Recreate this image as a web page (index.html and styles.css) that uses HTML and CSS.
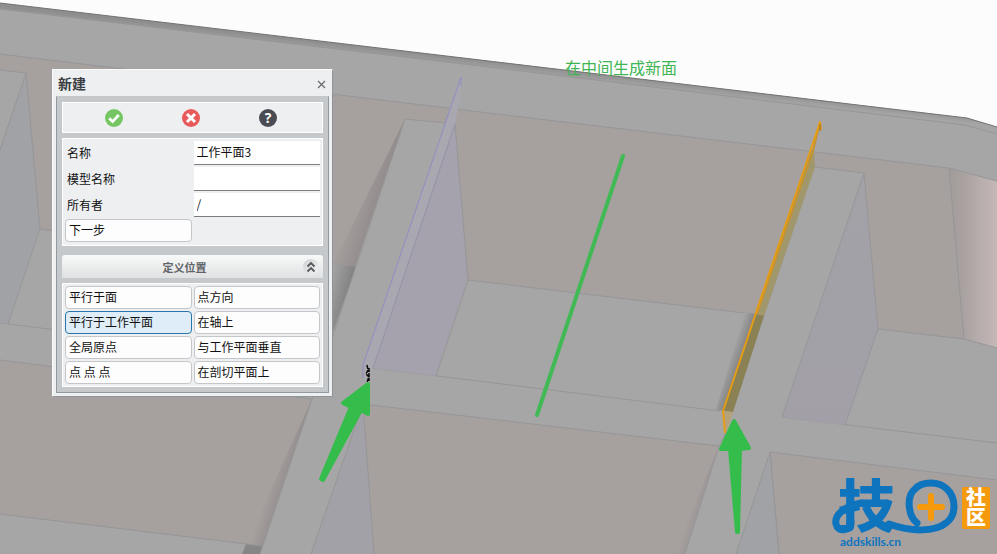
FILE: index.html
```html
<!DOCTYPE html>
<html lang="zh-CN">
<head>
    <meta charset="UTF-8">
    <meta name="viewport" content="width=device-width, initial-scale=1.0">
    <title>新建工作平面</title>
    <link rel="stylesheet" href="styles.css">
</head>
<body>
    <main class="viewport">
        <svg class="scene" viewBox="0 0 997 554" preserveAspectRatio="xMidYMid slice" aria-hidden="true">
            <defs>
                <linearGradient id="rim" x1="500" y1="62" x2="499" y2="71" gradientUnits="userSpaceOnUse">
                    <stop offset="0" stop-color="#8e8e8e"/>
                    <stop offset="1" stop-color="#a5a5a5"/>
                </linearGradient>
                <linearGradient id="corner">
                    <stop offset="0" stop-color="#a19b9a"/>
                    <stop offset="0.3" stop-color="#a9a2a1"/>
                    <stop offset="1" stop-color="#c4b8b7"/>
                </linearGradient>
                <linearGradient id="face" x1="0" y1="0" x2="0" y2="1">
                    <stop offset="0" stop-color="#a3a2a7"/>
                    <stop offset="1" stop-color="#a29fa8"/>
                </linearGradient>
                <linearGradient id="shade-wall" x1="349" y1="207" x2="374" y2="215" gradientUnits="userSpaceOnUse">
                    <stop offset="0" stop-color="#a6a09f"/>
                    <stop offset="1" stop-color="#928c8c"/>
                </linearGradient>
                <linearGradient id="shade-floor" x1="324" y1="298" x2="347" y2="304" gradientUnits="userSpaceOnUse">
                    <stop offset="0" stop-color="#a5a5a5"/>
                    <stop offset="1" stop-color="#808080"/>
                </linearGradient>
                <linearGradient id="shade-left" x1="273" y1="470" x2="289" y2="475" gradientUnits="userSpaceOnUse">
                    <stop offset="0" stop-color="#a6a09f"/>
                    <stop offset="1" stop-color="#948e8e"/>
                </linearGradient>
                <linearGradient id="shade-mid" x1="694" y1="496" x2="704" y2="499" gradientUnits="userSpaceOnUse">
                    <stop offset="0" stop-color="#a6a09f"/>
                    <stop offset="1" stop-color="#9b9595"/>
                </linearGradient>
                <linearGradient id="shade-plane" x1="729" y1="360" x2="741" y2="364" gradientUnits="userSpaceOnUse">
                    <stop offset="0" stop-color="#a5a5a5"/>
                    <stop offset="1" stop-color="#7e7e7e"/>
                </linearGradient>
            </defs>

            <rect width="997" height="554" fill="#a6a6a6"/>
            <polygon points="0,0 997,0 997,127 967,118 497,62 0,3" fill="#fcfcfc"/>
            <polygon points="0,3 497,62 967,118 997,127 997,134 965,125 497,68 0,9" fill="url(#rim)"/>
            <path class="edge edge-dark" d="M0 3 497 62 967 118 997 127"/>
            <path class="edge" d="M0 9 497 68 965 125 997 134"/>

            <!-- back wall -->
            <polygon points="0,54 497,114 949,168 964,339 468,280 40,229 0,224" fill="#a6a09f"/>
            <polygon points="949,168 997,181 997,348 964,339" fill="url(#corner)"/>
            <path class="edge" d="M0 54 497 114 949 168 997 181M949 168 964 339M40 229 468 280 878 329 964 339 997 348"/>

            <!-- shadows beside the first rib -->
            <polygon points="405,119 355,267 333,264" fill="url(#shade-wall)"/>
            <polygon points="333,264 356,267 333,332 310,330" fill="url(#shade-floor)"/>

            <!-- lower pockets -->
            <polygon points="0,360 312,399 263,546 0,514" fill="#a6a09f"/>
            <polygon points="312,399 263,546 246,544" fill="url(#shade-left)"/>
            <polygon points="246,544 263,546 260,554 242,554" fill="#868686"/>
            <polygon points="363,404 719,446 685,554 374,554" fill="#a6a09f"/>
            <polygon points="719,446 685,554 674,554" fill="url(#shade-mid)"/>
            <polygon points="770,452 997,480 997,554 779,554" fill="#a6a09f"/>
            <path class="edge" d="M0 360 312 399 260 554M0 514 263 546M363 404 719 446 685 554M779 554 770 452 997 480"/>
            <path class="edge" d="M0 323 333 364M373 368 720 411M782 417 997 443"/>

            <!-- left rib -->
            <polygon points="0,70 26,73 0,150" fill="#a6a6a6"/>
            <polygon points="26,73 40,229 8,324 0,323 0,150" fill="#a1a2a6"/>
            <path class="edge" d="M0 70 26 73 0 150M26 73 40 229 8 324"/>

            <!-- first rib -->
            <polygon points="405,119 455,124 373,368 363,404 312,399" fill="#a6a6a6"/>
            <path class="edge" d="M312 399 405 119 455 124"/>
            <polygon points="455,124 468,280 436,376 373,368" fill="#a5a2ad"/>
            <path class="edge" d="M455 124 468 280 436 376M455 124 373 368"/>
            <polygon points="363,404 374,554 311,554" fill="#a1a1a7"/>
            <path class="edge" d="M374 554 363 404 311 554"/>
            <polygon points="461,77 462,87 455,124 373,368 364,382 363,365" fill="#a9a8b0"/>
            <path d="M461 87V77L363 365V378" fill="none" stroke="#8f8dc4"/>
            <path d="M455 124 373 368" fill="none" stroke="#9693aa"/>

            <!-- second rib -->
            <polygon points="815,167 864,173 782,417 770,452 719,446 726,432" fill="#a6a6a6"/>
            <polygon points="864,173 878,329 845,425 782,417" fill="url(#face)"/>
            <path class="edge" d="M815 167 864 173 878 329 845 425M864 173 782 417M719 446 726 432"/>
            <polygon points="770,452 779,554 736,554" fill="#a0a2a6"/>
            <path class="edge" d="M779 554 770 452 736 554"/>

            <!-- selected plane -->
            <polygon points="745,312 757,314 724,411 716,410" fill="url(#shade-plane)"/>
            <polygon points="811,150 814,151 815,167 764,316 756,314" fill="#a1976d"/>
            <polygon points="756,314 764,316 733,412 723,411" fill="#8a8154"/>
            <polygon points="723,411 733,412 726,434" fill="#b5a27b"/>
            <path d="M820 122 813 151 757 314" fill="none" stroke="#c39332" stroke-width="2"/>
            <path d="M821 130 820 122 723 411 725 433" fill="none" stroke="#e59c16" stroke-width="2" stroke-linejoin="round"/>
            <path d="M820 124V131" stroke="#98681c"/>

            <!-- marks drawn by hand -->
            <path d="M623 156 537 415" stroke="#41b955" stroke-width="4" stroke-linecap="round"/>
            <path d="M367 365 368 370 366 374 369 377 367 382M369 368V381" fill="none" stroke="#080808" stroke-width="1.5" stroke-dasharray="4 1"/>
            <g fill="#35bd4b" stroke="#35bd4b" stroke-width="4" stroke-linejoin="round">
                <polygon points="368,384 343,403 351,407 321,479 323,480 361,410 368,414"/>
                <polygon points="734,421 721,449 730,449 737,532 738,532 740,449 749,448"/>
            </g>
        </svg>

        <p class="note">在中间生成新面</p>

        <form class="dialog" aria-labelledby="dialog-title" onsubmit="return false">
            <header class="dialog-header">
                <h1 id="dialog-title">新建</h1>
                <button class="close" type="button" aria-label="关闭">
                    <svg width="9" height="9" viewBox="0 0 9 9"><path d="M1 1 8 8M8 1 1 8" stroke="#666a6e" stroke-width="1.2"/></svg>
                </button>
            </header>

            <div class="dialog-body">
                <div class="panel toolbar">
                    <button class="tool" type="submit" aria-label="确定">
                        <svg width="18" height="18" viewBox="0 0 18 18"><circle cx="9" cy="9" r="9" fill="#75c663"/><path d="M4.2 9.3 7.6 12.6 13.8 6" fill="none" stroke="#fff" stroke-width="2.8"/></svg>
                    </button>
                    <button class="tool" type="button" aria-label="取消">
                        <svg width="18" height="18" viewBox="0 0 18 18"><circle cx="9" cy="9" r="9" fill="#e85a5c"/><path d="M5 5 13 13M13 5 5 13" stroke="#fff" stroke-width="3"/></svg>
                    </button>
                    <button class="tool" type="button" aria-label="帮助">
                        <svg width="18" height="18" viewBox="0 0 18 18"><circle cx="9" cy="9" r="9" fill="#4b4b53"/><text class="help-mark" x="9" y="14" text-anchor="middle">?</text></svg>
                    </button>
                </div>

                <div class="panel fields">
                    <label for="name">名称</label>
                    <input id="name" type="text" value="工作平面3">
                    <label for="model">模型名称</label>
                    <input id="model" type="text" value="">
                    <label for="owner">所有者</label>
                    <input id="owner" type="text" value="/">
                    <button class="option" type="button">下一步</button>
                </div>

                <div class="section-header">
                    <h2>定义位置</h2>
                    <button class="collapse" type="button" aria-label="折叠">
                        <svg width="10" height="12" viewBox="0 0 10 12"><path d="M1.5 5.5 5 2 8.5 5.5M1.5 10.5 5 7 8.5 10.5" fill="none" stroke="#56595c" stroke-width="1.8"/></svg>
                    </button>
                </div>

                <div class="panel options">
                    <button class="option" type="button">平行于面</button>
                    <button class="option" type="button">点方向</button>
                    <button class="option selected" type="button" aria-pressed="true">平行于工作平面</button>
                    <button class="option" type="button">在轴上</button>
                    <button class="option" type="button">全局原点</button>
                    <button class="option" type="button">与工作平面垂直</button>
                    <button class="option" type="button">点 点 点</button>
                    <button class="option" type="button">在剖切平面上</button>
                </div>
            </div>
        </form>

        <svg class="logo" width="164" height="78" viewBox="0 0 164 78" role="img" aria-label="技田社区 addskills.cn">
            <text class="logo-word" x="11" y="53">技</text>
            <g fill="none" stroke="#0e74be" stroke-width="7" stroke-linecap="round">
                <path d="M90 49C81 42 79 22 88 15C95 7 112 7 120 15C130 25 129 42 119 49C108 58 84 58 62 50"/>
                <path d="M34 29C18 32 7 41 9 50C11 59 23 57 24 48"/>
            </g>
            <path d="M104 22V44M93 33H115" stroke="#f59a0c" stroke-width="6" stroke-linecap="round"/>
            <rect x="135" y="13" width="28" height="42" rx="2" fill="#f59a0c"/>
            <text class="logo-tag" x="139" y="31">社</text>
            <text class="logo-tag" x="139" y="51">区</text>
            <text class="logo-site" x="13" y="72">addskills.cn</text>
        </svg>
    </main>
</body>
</html>
```

FILE: styles.css
```css
* {
    box-sizing: border-box;
}

body {
    margin: 0;
    font-family: "Noto Sans CJK SC", "Noto Sans", sans-serif;
    font-size: 12px;
    color: #111;
}

button,
input {
    margin: 0;
    font: inherit;
    color: inherit;
}

.viewport {
    position: relative;
    height: 100vh;
    overflow: hidden;
    background-color: #a6a6a6;
}

.scene {
    display: block;
    width: 100%;
    height: 100%;
}

.edge {
    fill: none;
    stroke: #969698;
    stroke-width: 1;
}

.edge-dark {
    stroke: #747474;
}

.note {
    position: absolute;
    top: 55px;
    left: 565px;
    margin: 0;
    font-size: 16px;
    line-height: 24px;
    color: #3fb553;
}

/* dialog window */
.dialog {
    position: absolute;
    top: 69px;
    left: 52px;
    width: 281px;
    padding: 0 3px 3px;
    background-color: #edeff1;
    border: 1px solid #fafbfc;
    border-right-color: #8d959b;
    border-bottom-color: #8d959b;
}

.dialog-header {
    display: flex;
    align-items: center;
    justify-content: space-between;
    height: 26px;
    padding-left: 2px;
}

h1 {
    margin: 0;
    font-size: 14px;
    line-height: 20px;
    color: #3a3d41;
}

.close,
.tool,
.collapse {
    display: flex;
    align-items: center;
    justify-content: center;
    padding: 0;
    background: none;
    border: none;
}

.close {
    width: 16px;
    height: 16px;
    padding-top: 2px;
}

.dialog-body {
    padding: 5px;
    background-color: #c6c9cc;
    border: 1px solid #929aa0;
    border-top-color: #c6c9cc;
}

.panel {
    background-color: #edeff1;
    border: 1px solid #fff;
}

.toolbar {
    display: flex;
    align-items: center;
    justify-content: center;
    gap: 59px;
    height: 31px;
    padding-right: 4px;
    margin-bottom: 5px;
}

.help-mark {
    font: bold 14px "Open Sans", sans-serif;
    fill: #fff;
}

.fields,
.options {
    display: grid;
    grid-template-columns: 1fr 1fr;
    column-gap: 2px;
    padding: 2px;
}

.fields {
    grid-auto-rows: 24px;
    row-gap: 2px;
    margin-bottom: 9px;
}

label {
    padding-left: 2px;
    line-height: 24px;
}

input {
    width: 100%;
    min-width: 0;
    height: 24px;
    padding: 0 3px 2px;
    background-color: #fff;
    border: none;
    border-bottom: 1px solid #7b7d80;
}

.option {
    height: 23px;
    padding: 0 3px 1px;
    line-height: 20px;
    text-align: left;
    background-color: #fdfdfd;
    border: 1px solid #c5c6c9;
    border-radius: 4px;
}

.option.selected {
    background-color: #deedf8;
    border-color: #2876ac;
}

.section-header {
    display: flex;
    align-items: center;
    height: 23px;
    padding: 0 4px;
    margin-bottom: 5px;
    background: linear-gradient(#f8f9f9, #dfe1e2);
    border-radius: 3px 3px 0 0;
}

h2 {
    flex: 1;
    margin: 0;
    font-size: 11px;
    line-height: 20px;
    text-align: center;
    color: #606367;
}

.collapse {
    width: 16px;
    height: 16px;
    background: linear-gradient(135deg, #cfd1d3, #f4f4f4);
    border-radius: 50%;
}

.options {
    row-gap: 2px;
}

/* watermark */
.logo {
    position: absolute;
    right: 6px;
    bottom: 2px;
    overflow: visible;
}

.logo-word {
    font: 900 57px "Noto Sans CJK SC", sans-serif;
    fill: #0e74be;
}

.logo-tag {
    font: 900 20px "Noto Sans CJK SC", sans-serif;
    fill: #fff;
}

.logo-site {
    font: bold 12px Lato, sans-serif;
    fill: #0e74be;
}
```
